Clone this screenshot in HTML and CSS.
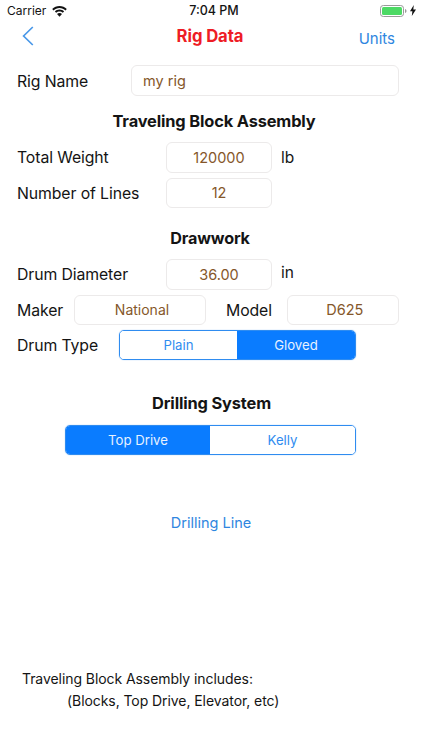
FILE: index.html
```html
<!DOCTYPE html>
<html lang="en">
<head>
<meta charset="utf-8">
<title>Rig Data</title>
<link rel="stylesheet" href="styles.css">
</head>
<body>
<div class="screen">
  <header class="status">
    <div class="status-left">
      <span>Carrier</span>
      <svg class="wifi" width="15" height="11" viewBox="0 0 15 11"><path d="M7.500 0C10.300 0 12.900 1.100 14.800 3L13.500 4.400C11.900 2.800 9.800 1.900 7.500 1.900S3.100 2.800 1.500 4.400L.2 3C2.100 1.100 4.700 0 7.500 0Z" fill="#111"/><path d="M7.500 3.600C9.300 3.600 10.900 4.300 12.100 5.500L10.800 6.800C9.900 6 8.800 5.500 7.500 5.500S5.100 6 4.200 6.800L2.900 5.500C4.100 4.300 5.700 3.600 7.500 3.600Z" fill="#111"/><path d="M7.500 7.100C8.500 7.100 9.300 7.500 10 8.100L7.500 10.700 5 8.100C5.700 7.500 6.500 7.100 7.500 7.100Z" fill="#111"/></svg>
    </div>
    <div class="status-time">7:04 PM</div>
    <div class="status-right">
      <svg width="28" height="12" viewBox="0 0 28 12"><rect x=".5" y=".5" width="23" height="11" rx="2.800" fill="none" stroke="#9a9a9a"/><rect x="2" y="2" width="20" height="8" rx="1.500" fill="#4cd964"/><path d="M25 4v4c.9-.2 1.500-1 1.500-2s-.6-1.800-1.500-2Z" fill="#9a9a9a"/></svg>
      <svg width="6" height="11" viewBox="0 0 6 11"><path d="M3.800 0 0 6.200h2.400L1.800 11 6 4.500H3.300Z" fill="#111"/></svg>
    </div>
  </header>

  <nav class="nav">
    <svg class="back" width="12" height="20" viewBox="0 0 12 20"><path d="M10.800 1 1.600 10l9.200 9" fill="none" stroke="#4a98e8" stroke-width="1.700"/></svg>
    <h1 class="title">Rig Data</h1>
    <a class="units">Units</a>
  </nav>

  <main class="content">
    <div class="row row-name">
      <span class="label label-name">Rig Name</span>
      <div class="field field-name">my rig</div>
    </div>

    <h2 class="heading heading-block">Traveling Block Assembly</h2>
    <div class="row">
      <span class="label label-wide">Total Weight</span>
      <div class="field field-num">120000</div>
      <span class="unit">lb</span>
    </div>
    <div class="row row-next">
      <span class="label label-wide">Number of Lines</span>
      <div class="field field-num">12</div>
    </div>

    <h2 class="heading heading-draw">Drawwork</h2>
    <div class="row">
      <span class="label label-wide">Drum Diameter</span>
      <div class="field field-num">36.00</div>
      <span class="unit unit-up">in</span>
    </div>
    <div class="row row-next">
      <span class="label label-maker">Maker</span>
      <div class="field field-maker">National</div>
      <span class="label label-model">Model</span>
      <div class="field field-model">D625</div>
    </div>
    <div class="row row-next">
      <span class="label label-type">Drum Type</span>
      <div class="segment segment-type">
        <span class="seg seg-plain">Plain</span>
        <span class="seg seg-on seg-gloved">Gloved</span>
      </div>
    </div>

    <h2 class="heading heading-system">Drilling System</h2>
    <div class="segment segment-system">
      <span class="seg seg-on seg-top">Top Drive</span>
      <span class="seg seg-kelly">Kelly</span>
    </div>

    <a class="link">Drilling Line</a>

    <div class="note">
      <p class="note-line">Traveling Block Assembly includes:</p>
      <p class="note-line note-indent">(Blocks, Top Drive, Elevator, etc)</p>
    </div>
  </main>
</div>
</body>
</html>
```
FILE: styles.css
```css
* { box-sizing: border-box; }
html, body { margin: 0; padding: 0; background: #fff; }
body { font-family: Inter, "Liberation Sans", sans-serif; color: #141414; }
.screen { width: 422px; height: 750px; overflow: hidden; display: flex; flex-direction: column; }

.status { height: 21px; display: grid; grid-template-columns: 1fr auto 1fr; align-items: center; padding: 0 6px 0 7px; font-size: 12px; }
.status-left { display: flex; align-items: center; gap: 6px; }
.wifi { margin-top: 1px; }
.status-time { font-weight: 500; font-size: 12.500px; margin-left: 5px; }
.status-right { display: flex; justify-content: flex-end; align-items: center; gap: 2px; }

.nav { height: 30px; display: grid; grid-template-columns: 1fr auto 1fr; align-items: center; padding: 0 27px 0 22px; }
.title { margin: 0 0 0 3px; font-size: 16.700px; font-weight: 700; color: #ee1c25; letter-spacing: -.1px; }
.units { justify-self: end; font-size: 15px; color: #2f86e0; margin-top: 5px; }

.content { flex: 1; display: flex; flex-direction: column; padding: 14px 23px 0 17px; }
.row { display: flex; align-items: center; height: 30.500px; }
.row-name { height: 31px; }
.row-next { margin-top: 5px; }
.label { font-size: 15.800px; white-space: nowrap; letter-spacing: -.1px; padding-top: 1px; }
.label-name { width: 114px; }
.label-wide { width: 149px; }
.label-maker { width: 57px; }
.label-model { width: 60.500px; margin-left: 20px; }
.label-type { width: 102px; }

.field { height: 100%; border: 1px solid #eceaea; border-radius: 6px; background: #fff; color: #85572a; font-size: 14.500px; display: flex; align-items: center; justify-content: center; }
.field-name { flex: 1; justify-content: flex-start; padding-left: 11px; }
.field-num { width: 106px; }
.field-maker { width: 132px; padding-left: 4px; font-size: 14px; }
.field-model { flex: 1; padding-left: 4px; }
.unit { font-size: 15.500px; margin-left: 9px; }
.unit-up { margin-top: -3px; }

.heading { margin: 0; font-size: 16.400px; font-weight: 700; line-height: 20px; text-align: center; letter-spacing: -.15px; }
.heading-block { margin-top: 15px; margin-bottom: 11px; padding-left: 12px; }
.heading-draw { margin-top: 20px; margin-bottom: 11px; padding-left: 4px; font-size: 16.200px; }
.heading-system { margin-top: 32.500px; margin-bottom: 12px; padding-left: 7px; }

.segment { display: flex; height: 30px; border: 1px solid #2f8cf0; border-radius: 5px; overflow: hidden; font-size: 13.200px; box-shadow: 0 0 1px #5aa5f5; }
.segment-type { width: 237px; }
.segment-system { width: 291px; margin-left: 48px; }
.seg { display: flex; align-items: center; justify-content: center; color: #2f8cf0; background: #fff; }
.seg-on { background: #0a7cff; color: #e6f1ff; }
.seg-plain { width: 117px; }
.seg-gloved { flex: 1; }
.seg-top { width: 144px; }
.seg-kelly { flex: 1; }

.link { margin-top: 58px; margin-left: 6px; align-self: center; font-size: 14.500px; line-height: 20px; color: #2f86e0; }

.note { margin-top: 135px; padding-left: 5px; font-size: 14px; letter-spacing: -.07px; }
.note-line { margin: 0; line-height: 22px; }
.note-indent { padding-left: 45px; }
```
